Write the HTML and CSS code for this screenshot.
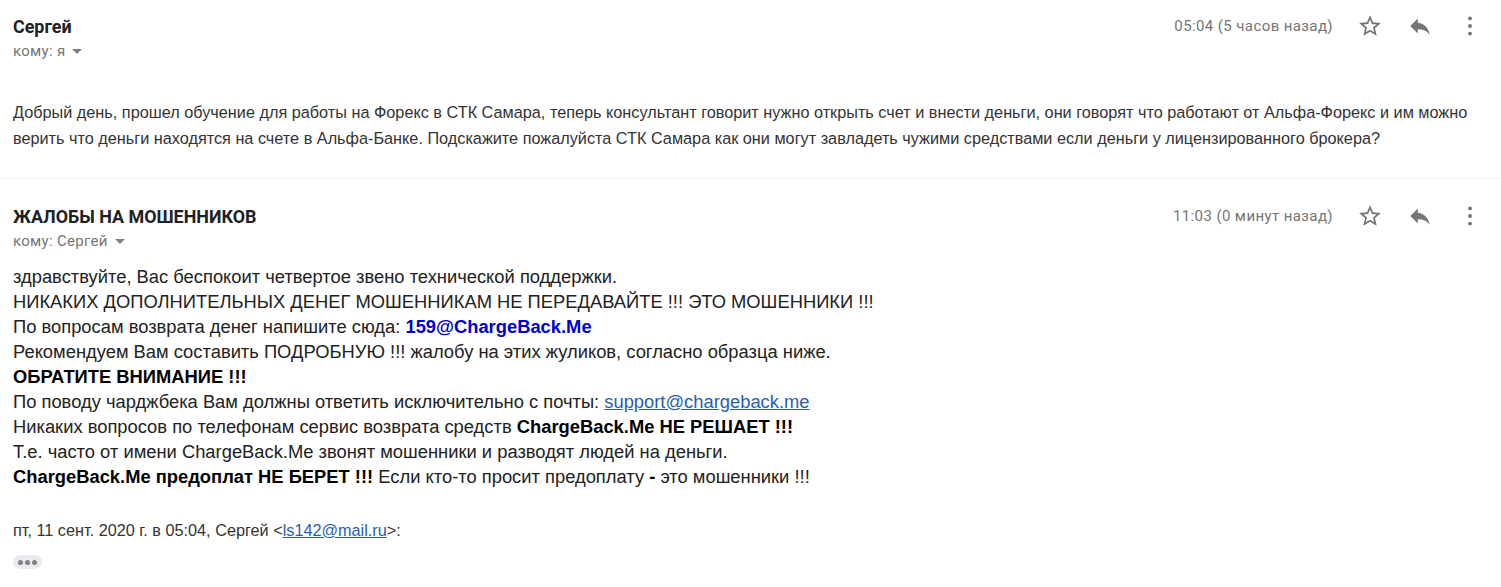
FILE: index.html
```html
<!DOCTYPE html>
<html lang="ru">
<head>
    <meta charset="UTF-8">
    <title>Письмо</title>
    <link rel="stylesheet" href="styles.css">
</head>
<body>
    <div class="message first">
        <div class="msg-head">
            <div class="from">
                <div class="sender">Сергей</div>
                <div class="recipient">кому: я <span class="caret"></span></div>
            </div>
            <div class="meta">
                <span class="time">05:04 (5 часов назад)</span>
                <svg class="icon star" viewBox="0 0 24 24"><path d="M22 9.24l-7.19-.62L12 2 9.19 8.63 2 9.24l5.46 4.73L5.82 21 12 17.27 18.18 21l-1.63-7.03L22 9.24zM12 15.4l-3.76 2.27 1-4.28-3.32-2.88 4.38-.38L12 6.1l1.71 4.04 4.38.38-3.32 2.88 1 4.28L12 15.4z"/></svg>
                <svg class="icon reply" viewBox="0 0 24 24"><path d="M10 9V5l-7 7 7 7v-4.1c5 0 8.5 1.6 11 5.1-1-5-4-10-11-11z"/></svg>
                <svg class="icon more" viewBox="0 0 24 24"><circle cx="12" cy="5" r="1.8"/><circle cx="12" cy="12" r="1.8"/><circle cx="12" cy="19" r="1.8"/></svg>
            </div>
        </div>
        <p class="question">Добрый день, прошел обучение для работы на Форекс в СТК Самара, теперь консультант говорит нужно открыть счет и внести деньги, они говорят что работают от Альфа-Форекс и им можно верить что деньги находятся на счете в Альфа-Банке. Подскажите пожалуйста СТК Самара как они могут завладеть чужими средствами если деньги у лицензированного брокера?</p>
    </div>

    <div class="message">
        <div class="msg-head">
            <div class="from">
                <div class="sender">ЖАЛОБЫ НА МОШЕННИКОВ</div>
                <div class="recipient">кому: Сергей <span class="caret"></span></div>
            </div>
            <div class="meta">
                <span class="time">11:03 (0 минут назад)</span>
                <svg class="icon star" viewBox="0 0 24 24"><path d="M22 9.24l-7.19-.62L12 2 9.19 8.63 2 9.24l5.46 4.73L5.82 21 12 17.27 18.18 21l-1.63-7.03L22 9.24zM12 15.4l-3.76 2.27 1-4.28-3.32-2.88 4.38-.38L12 6.1l1.71 4.04 4.38.38-3.32 2.88 1 4.28L12 15.4z"/></svg>
                <svg class="icon reply" viewBox="0 0 24 24"><path d="M10 9V5l-7 7 7 7v-4.1c5 0 8.5 1.6 11 5.1-1-5-4-10-11-11z"/></svg>
                <svg class="icon more" viewBox="0 0 24 24"><circle cx="12" cy="5" r="1.8"/><circle cx="12" cy="12" r="1.8"/><circle cx="12" cy="19" r="1.8"/></svg>
            </div>
        </div>
        <div class="reply-body">
            <div>здравствуйте, Вас беспокоит четвертое звено технической поддержки.</div>
            <div>НИКАКИХ ДОПОЛНИТЕЛЬНЫХ ДЕНЕГ МОШЕННИКАМ НЕ ПЕРЕДАВАЙТЕ !!! ЭТО МОШЕННИКИ !!!</div>
            <div>По вопросам возврата денег напишите сюда: <b class="blue">159@ChargeBack.Me</b></div>
            <div>Рекомендуем Вам составить ПОДРОБНУЮ !!! жалобу на этих жуликов, согласно образца ниже.</div>
            <div><b>ОБРАТИТЕ ВНИМАНИЕ !!!</b></div>
            <div>По поводу чарджбека Вам должны ответить исключительно с почты: <a href="#">support@chargeback.me</a></div>
            <div>Никаких вопросов по телефонам сервис возврата средств <b>ChargeBack.Me НЕ РЕШАЕТ !!!</b></div>
            <div>Т.е. часто от имени ChargeBack.Me звонят мошенники и разводят людей на деньги.</div>
            <div><b>ChargeBack.Me предоплат НЕ БЕРЕТ !!!</b> Если кто-то просит предоплату <b>-</b> это мошенники !!!</div>
        </div>
        <div class="quote-line">пт, 11 сент. 2020 г. в 05:04, Сергей &lt;<a href="#">ls142@mail.ru</a>&gt;:</div>
        <div class="dots"><i></i><i></i><i></i></div>
    </div>
</body>
</html>
```

FILE: styles.css
```css
body {
    margin: 0;
    background-color: #fff;
    color: #222;
    font-family: "Liberation Sans", Arial, sans-serif;
    overflow: hidden;
}
a {
    color: #2a5db0;
}
.message {
    padding: 0 18px 0 13px;
}
.message.first {
    height: 178px;
    border-bottom: 1px solid #f1f1f1;
}
.msg-head {
    display: flex;
    justify-content: space-between;
    padding-top: 27px;
}
.first .msg-head {
    padding-top: 16px;
}
.sender {
    font-family: Roboto, sans-serif;
    font-weight: 700;
    font-size: 17.9px;
    line-height: 22px;
    color: #202124;
}
.recipient {
    font-family: Roboto, sans-serif;
    font-size: 15px;
    line-height: 20px;
    margin-top: 3px;
    color: #757575;
    display: flex;
    align-items: center;
    gap: 4px;
    letter-spacing: 0.3px;
}
.caret {
    width: 0;
    height: 0;
    margin-left: 3px;
    border-left: 5px solid transparent;
    border-right: 5px solid transparent;
    border-top: 5px solid #808080;
}
.meta {
    display: flex;
    align-items: center;
    height: 20px;
}
.time {
    font-family: Roboto, sans-serif;
    font-size: 15px;
    color: #757575;
    letter-spacing: 0.4px;
    margin-right: 24px;
}
.icon {
    fill: #757575;
    width: 26px;
    height: 26px;
}
.reply {
    margin-left: 24px;
}
.more {
    margin-left: 24px;
}
.question {
    margin: 38px 0 0;
    font-size: 16.25px;
    line-height: 26px;
    color: #333;
}
.reply-body {
    margin-top: 13px;
    font-size: 18.35px;
    line-height: 25px;
    color: #222;
}
.reply-body b {
    color: #000;
}
.reply-body .blue {
    color: #0000cc;
}
.quote-line {
    margin-top: 30px;
    font-size: 16.25px;
    line-height: 22px;
    color: #333;
}
.dots {
    display: flex;
    align-items: center;
    justify-content: center;
    gap: 2px;
    width: 29px;
    height: 14px;
    margin-top: 14px;
    border-radius: 7px;
    background-color: #e8eaed;
}
.dots i {
    width: 5px;
    height: 5px;
    border-radius: 50%;
    background-color: #808080;
}
```
